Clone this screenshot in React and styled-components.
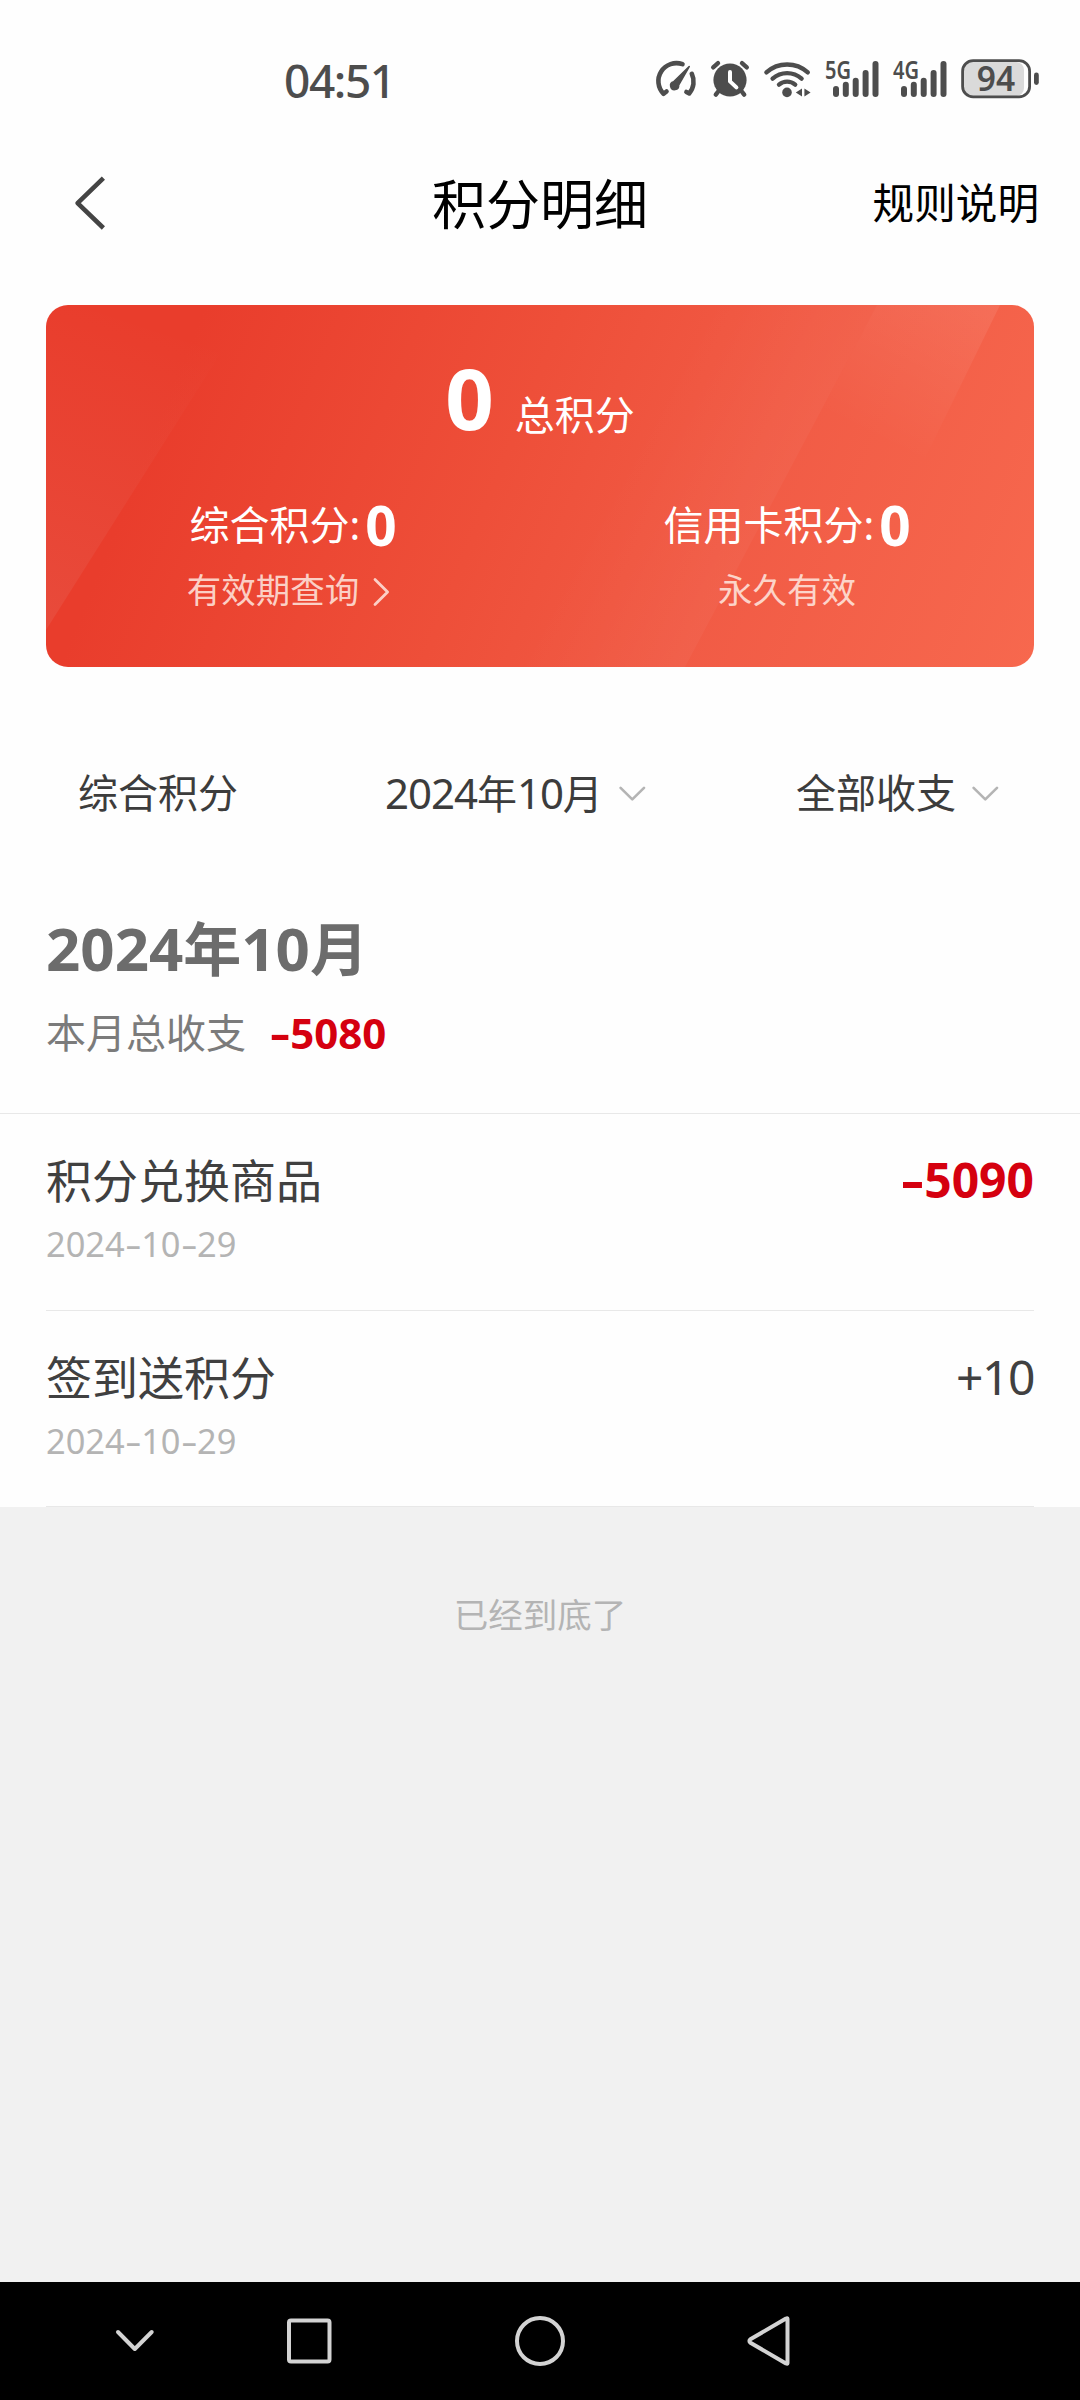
import React from 'react';
import styled, { createGlobalStyle } from 'styled-components';

const GlobalStyle = createGlobalStyle`
  * {
    box-sizing: border-box;
  }

  body {
    margin: 0;
    background: #f1f1f1;
    font-family: 'Noto Sans', 'Noto Sans CJK SC', sans-serif;
    color: #404040;
  }
`;

const Screen = styled.div`
  display: flex;
  flex-direction: column;
  width: 1080px;
  height: 2400px;
  background: #f1f1f1;
  overflow: hidden;
`;

const Page = styled.main`
  background: #fefefe;
`;

/* status bar */

const StatusBar = styled.div`
  display: flex;
  align-items: center;
  justify-content: space-between;
  height: 158px;
  padding: 0 40px 0 284px;
`;

const Clock = styled.div`
  padding-top: 2px;
  font-size: 46px;
  font-weight: 500;
  line-height: 50px;
  letter-spacing: -1.4px;
  color: #4d4d4d;
`;

const StatusIcons = styled.div`
  display: flex;
  align-items: center;
  gap: 13px;

  svg {
    display: block;
    overflow: visible;
  }
`;

/* title bar */

const TitleBar = styled.header`
  display: grid;
  grid-template-columns: 1fr auto 1fr;
  align-items: center;
  height: 90px;
  padding: 0 41px 0 72px;
`;

const BackIcon = styled.svg`
  display: block;
  margin-top: -1px;
`;

const Title = styled.h1`
  margin: 0;
  padding: 2px 31px 0 0;
  font-size: 54px;
  font-weight: 400;
  line-height: 60px;
  color: #000;
`;

const RulesLink = styled.span`
  justify-self: end;
  font-size: 41.6px;
  line-height: 60px;
  color: #000;
`;

/* points card */

const Card = styled.section`
  position: relative;
  display: flex;
  flex-direction: column;
  height: 362px;
  margin: 57px 46px 0;
  border-radius: 22px;
  overflow: hidden;
  color: #fff;
  background: linear-gradient(112deg, #e93d2c 14%, #ee4f39 46%, #f15b45 68%, #f7684e 100%);
`;

const CardShine = styled.svg`
  position: absolute;
  inset: 0;
`;

const Total = styled.div`
  position: relative;
  display: flex;
  align-items: baseline;
  justify-content: center;
  gap: 21px;
  height: 164px;
  padding-top: 42px;
  font-size: 40px;
  line-height: 100px;
`;

const TotalValue = styled.strong`
  font-size: 85px;
  font-weight: 700;
  line-height: 100px;
`;

const Columns = styled.div`
  position: relative;
  display: grid;
  grid-template-columns: 1fr 1fr;
  padding-top: 24px;
`;

const Column = styled.div`
  display: flex;
  flex-direction: column;
  align-items: center;
`;

const ColumnLabel = styled.div`
  display: flex;
  align-items: center;
  gap: 5px;
  height: 64px;
  font-size: 40px;
  line-height: 60px;
`;

const ColumnValue = styled.strong`
  font-size: 55px;
  line-height: 60px;
`;

const ColumnNote = styled.div`
  display: flex;
  align-items: center;
  height: 66px;
  font-size: 34.5px;
  line-height: 66px;
  color: rgba(255, 240, 232, 0.82);

  svg {
    display: block;
    margin: 4px 9px 0 14px;
  }
`;

/* filters */

const Filters = styled.div`
  display: flex;
  align-items: center;
  height: 128px;
  margin-top: 62px;
  padding: 0 81px 0 78px;
`;

const Filter = styled.div`
  display: flex;
  flex-shrink: 0;
  align-items: center;
  gap: 16px;
  width: ${(props) => props.$width}px;
  font-size: 40px;
  line-height: 60px;
  white-space: nowrap;
  color: #3c3c3c;
`;

const Digits = styled.span`
  font-size: 1.05em;
  letter-spacing: -0.025em;
`;

/* month summary */

const Summary = styled.div`
  height: 257px;
  padding: 51px 46px 0;
  border-bottom: 1px solid #e8e8e8;
`;

const Month = styled.h2`
  margin: 0;
  font-size: 58px;
  font-weight: 700;
  line-height: 80px;
  color: #6c6c6c;
`;

const MonthDigits = styled.span`
  font-size: 60px;
`;

const SummaryLine = styled.div`
  display: flex;
  align-items: center;
  gap: 24px;
  margin-top: 14px;
  font-size: 40px;
  line-height: 60px;
  color: #7b7b7b;
`;

const Amount = styled.span`
  font-size: ${(props) => props.$size}px;
  font-weight: ${(props) => (props.$spent ? 700 : 400)};
  line-height: 60px;
  letter-spacing: ${(props) => (props.$spent ? 0 : '-0.03em')};
  color: ${(props) => (props.$spent ? '#d5000f' : '#404040')};
`;

// The minus is drawn wider than the font's own hyphen
const Dash = styled.span`
  display: inline-block;
  width: 0.48em;
  text-align: center;
  transform: scaleX(1.5);
`;

/* records */

const Records = styled.ul`
  margin: 0;
  padding: 0 46px;
  list-style: none;
`;

const Record = styled.li`
  display: flex;
  justify-content: space-between;
  height: 197px;
  padding-top: 36px;
  border-bottom: 1px solid #e8e8e8;

  &:last-child {
    height: 196px;
  }
`;

const RecordName = styled.div`
  font-size: 46px;
  line-height: 60px;
`;

const RecordDate = styled.div`
  margin-top: 6px;
  font-size: 34.4px;
  line-height: 56px;
  color: #b4b4b4;
`;

const EndNote = styled.p`
  flex: 1;
  margin: 0;
  padding-top: 78px;
  text-align: center;
  font-size: 34.5px;
  line-height: 60px;
  color: #b4b4b4;
`;

/* system navigation */

const NavBar = styled.nav`
  height: 118px;
  background: #000;

  svg {
    display: block;
  }
`;

const dark = '#4d4d4d';

const GaugeIcon = () => (
  <svg width="42" height="40" viewBox="0 0 42 40" fill="none" stroke={dark} strokeWidth="4.6" strokeLinecap="round" strokeLinejoin="round">
    <path d="M27.5 5.2A18 18 0 0 0 8.6 34.8L11.5 32.5" />
    <path d="M36.8 14.8A18 18 0 0 1 34.2 34.4L31.4 33" />
    <path d="M34.2 7.6 23.6 26.2a4 4 0 1 1-5-3.5z" fill={dark} strokeWidth="1.6" />
  </svg>
);

const AlarmIcon = () => (
  <svg width="40" height="40" viewBox="0 0 40 40" fill="none" stroke={dark} strokeWidth="4.4" strokeLinecap="round">
    <circle cx="20" cy="21" r="16.6" fill={dark} stroke="none" />
    <path d="M3.2 8.4 8 4.2M36.8 8.4 32 4.2M8.6 32 5.8 35.6M31.4 32l2.8 3.6" />
    <path d="M20 13v9.4l6.4 6" stroke="#fff" strokeWidth="4" strokeLinejoin="round" />
  </svg>
);

const WifiIcon = () => (
  <svg width="49" height="40" viewBox="0 0 49 40" fill="none" stroke={dark} strokeWidth="4.4" strokeLinecap="round">
    <path d="M3.4 13.4a31 31 0 0 1 41.4 0" />
    <path d="M9.6 19.6a22 22 0 0 1 29 0" />
    <path d="M16 25.6a12.5 12.5 0 0 1 16.2 0" />
    <circle cx="24" cy="33.4" r="4.8" fill={dark} stroke="none" />
    <path d="M39 29.6v8l-6.2-4zM41.4 29.6v8l6.2-4z" fill={dark} stroke="none" />
  </svg>
);

const SignalIcon = ({ label }) => (
  <svg width="55" height="40" viewBox="0 0 55 40" fill={dark}>
    <text x="0" y="19.8" fontSize="24.5" fontWeight="600" textLength="26" lengthAdjust="spacingAndGlyphs">
      {label}
    </text>
    <rect x="8" y="27" width="6" height="11" rx="3" />
    <rect x="17.8" y="22.8" width="6" height="15.2" rx="3" />
    <rect x="27.7" y="18.8" width="6" height="19.2" rx="3" />
    <rect x="37.6" y="11" width="6" height="27" rx="3" />
    <rect x="47.5" y="2" width="6" height="36" rx="3" />
  </svg>
);

const BatteryIcon = () => (
  <svg width="79" height="40" viewBox="0 0 79 40">
    <rect x="3" y="3" width="60" height="34" rx="8" fill="#dadada" />
    <rect x="1.6" y="1.7" width="67" height="36.2" rx="10.5" fill="none" stroke={dark} strokeWidth="2.8" />
    <rect x="73" y="13.5" width="4.8" height="12.5" rx="2.4" fill={dark} />
    <text x="35" y="31.8" fontSize="33.5" fontWeight="600" fill={dark} textAnchor="middle">
      94
    </text>
  </svg>
);

const DownIcon = () => (
  <svg width="27" height="16" viewBox="0 0 27 16" fill="none" stroke="#b4b4b4" strokeWidth="2.6" strokeLinecap="round" strokeLinejoin="round">
    <path d="M1.6 2.8 13.3 14.4 25 2.8" />
  </svg>
);

const RightIcon = () => (
  <svg width="17" height="30" viewBox="0 0 17 30" fill="none" stroke="#fccfc6" strokeWidth="2.8" strokeLinecap="round" strokeLinejoin="round">
    <path d="M2 2.4 14.6 15 2 27.6" />
  </svg>
);

const records = [
  { name: '积分兑换商品', date: '2024-10-29', amount: '-5090' },
  { name: '签到送积分', date: '2024-10-29', amount: '+10' },
];

const withDashes = (text) =>
  text.split(/(-)/).map((part, index) => (part === '-' ? <Dash key={index}>-</Dash> : part));

const App = () => {
  return (
    <>
      <GlobalStyle />
      <Screen>
        <Page>
          <StatusBar>
            <Clock>04:51</Clock>
            <StatusIcons>
              <GaugeIcon />
              <AlarmIcon />
              <WifiIcon />
              <SignalIcon label="5G" />
              <SignalIcon label="4G" />
              <BatteryIcon />
            </StatusIcons>
          </StatusBar>

          <TitleBar>
            <BackIcon width="36" height="54" viewBox="0 0 36 54" fill="none" stroke="#444" strokeWidth="4.6" strokeLinejoin="round">
              <path d="M31.4 2.2 5.6 27.2 31.4 52" />
            </BackIcon>
            <Title>积分明细</Title>
            <RulesLink>规则说明</RulesLink>
          </TitleBar>

          <Card>
            <CardShine width="988" height="362" viewBox="0 0 988 362">
              <defs>
                <linearGradient id="left" gradientUnits="userSpaceOnUse" x1="20" y1="320" x2="120" y2="20">
                  <stop offset="0" stopColor="#e0e0e0" stopOpacity="0.08" />
                  <stop offset="1" stopColor="#e0e0e0" stopOpacity="0" />
                </linearGradient>
                <linearGradient id="middle" gradientUnits="userSpaceOnUse" x1="590" y1="130" x2="735" y2="208">
                  <stop offset="0" stopColor="#fff" stopOpacity="0" />
                  <stop offset="1" stopColor="#fff" stopOpacity="0.035" />
                </linearGradient>
                <linearGradient id="right" gradientUnits="userSpaceOnUse" x1="935" y1="0" x2="860" y2="150">
                  <stop offset="0" stopColor="#fff" stopOpacity="0.08" />
                  <stop offset="1" stopColor="#fff" stopOpacity="0" />
                </linearGradient>
              </defs>
              <path d="M0 0H205L0 325z" fill="url(#left)" />
              <path d="M640 0H831L639 362H450z" fill="url(#middle)" />
              <path d="M831 0H954L866 180H736z" fill="url(#right)" />
            </CardShine>
            <Total>
              <TotalValue>0</TotalValue>
              总积分
            </Total>
            <Columns>
              <Column>
                <ColumnLabel>
                  综合积分:
                  <ColumnValue>0</ColumnValue>
                </ColumnLabel>
                <ColumnNote>
                  有效期查询
                  <RightIcon />
                </ColumnNote>
              </Column>
              <Column>
                <ColumnLabel>
                  信用卡积分:
                  <ColumnValue>0</ColumnValue>
                </ColumnLabel>
                <ColumnNote>永久有效</ColumnNote>
              </Column>
            </Columns>
          </Card>

          <Filters>
            <Filter $width={307}>综合积分</Filter>
            <Filter $width={411}>
              <span>
                <Digits>2024</Digits>年<Digits>10</Digits>月
              </span>
              <DownIcon />
            </Filter>
            <Filter $width={203}>
              全部收支
              <DownIcon />
            </Filter>
          </Filters>

          <Summary>
            <Month>
              <MonthDigits>2024</MonthDigits>年<MonthDigits>10</MonthDigits>月
            </Month>
            <SummaryLine>
              本月总收支
              <Amount $size={42} $spent>
                {withDashes('-5080')}
              </Amount>
            </SummaryLine>
          </Summary>

          <Records>
            {records.map((record) => (
              <Record key={record.name}>
                <div>
                  <RecordName>{record.name}</RecordName>
                  <RecordDate>{withDashes(record.date)}</RecordDate>
                </div>
                <Amount $size={48} $spent={record.amount.startsWith('-')}>
                  {withDashes(record.amount)}
                </Amount>
              </Record>
            ))}
          </Records>
        </Page>

        <EndNote>已经到底了</EndNote>

        <NavBar>
          <svg width="1080" height="118" viewBox="0 0 1080 118" fill="none" stroke="#d3d3d3" strokeWidth="4" strokeLinecap="round" strokeLinejoin="round">
            <path d="M118 50 134.8 67 151.7 50" />
            <rect x="289" y="38.5" width="40.5" height="41" rx="2" />
            <circle cx="540" cy="59" r="23" />
            <path d="M787.5 36.8V81.2Q787.5 82.4 786 81.4L750.4 60.8Q748.4 59 750.4 57.2L786 36.6Q787.5 35.6 787.5 36.8z" />
          </svg>
        </NavBar>
      </Screen>
    </>
  );
};

export default App;
